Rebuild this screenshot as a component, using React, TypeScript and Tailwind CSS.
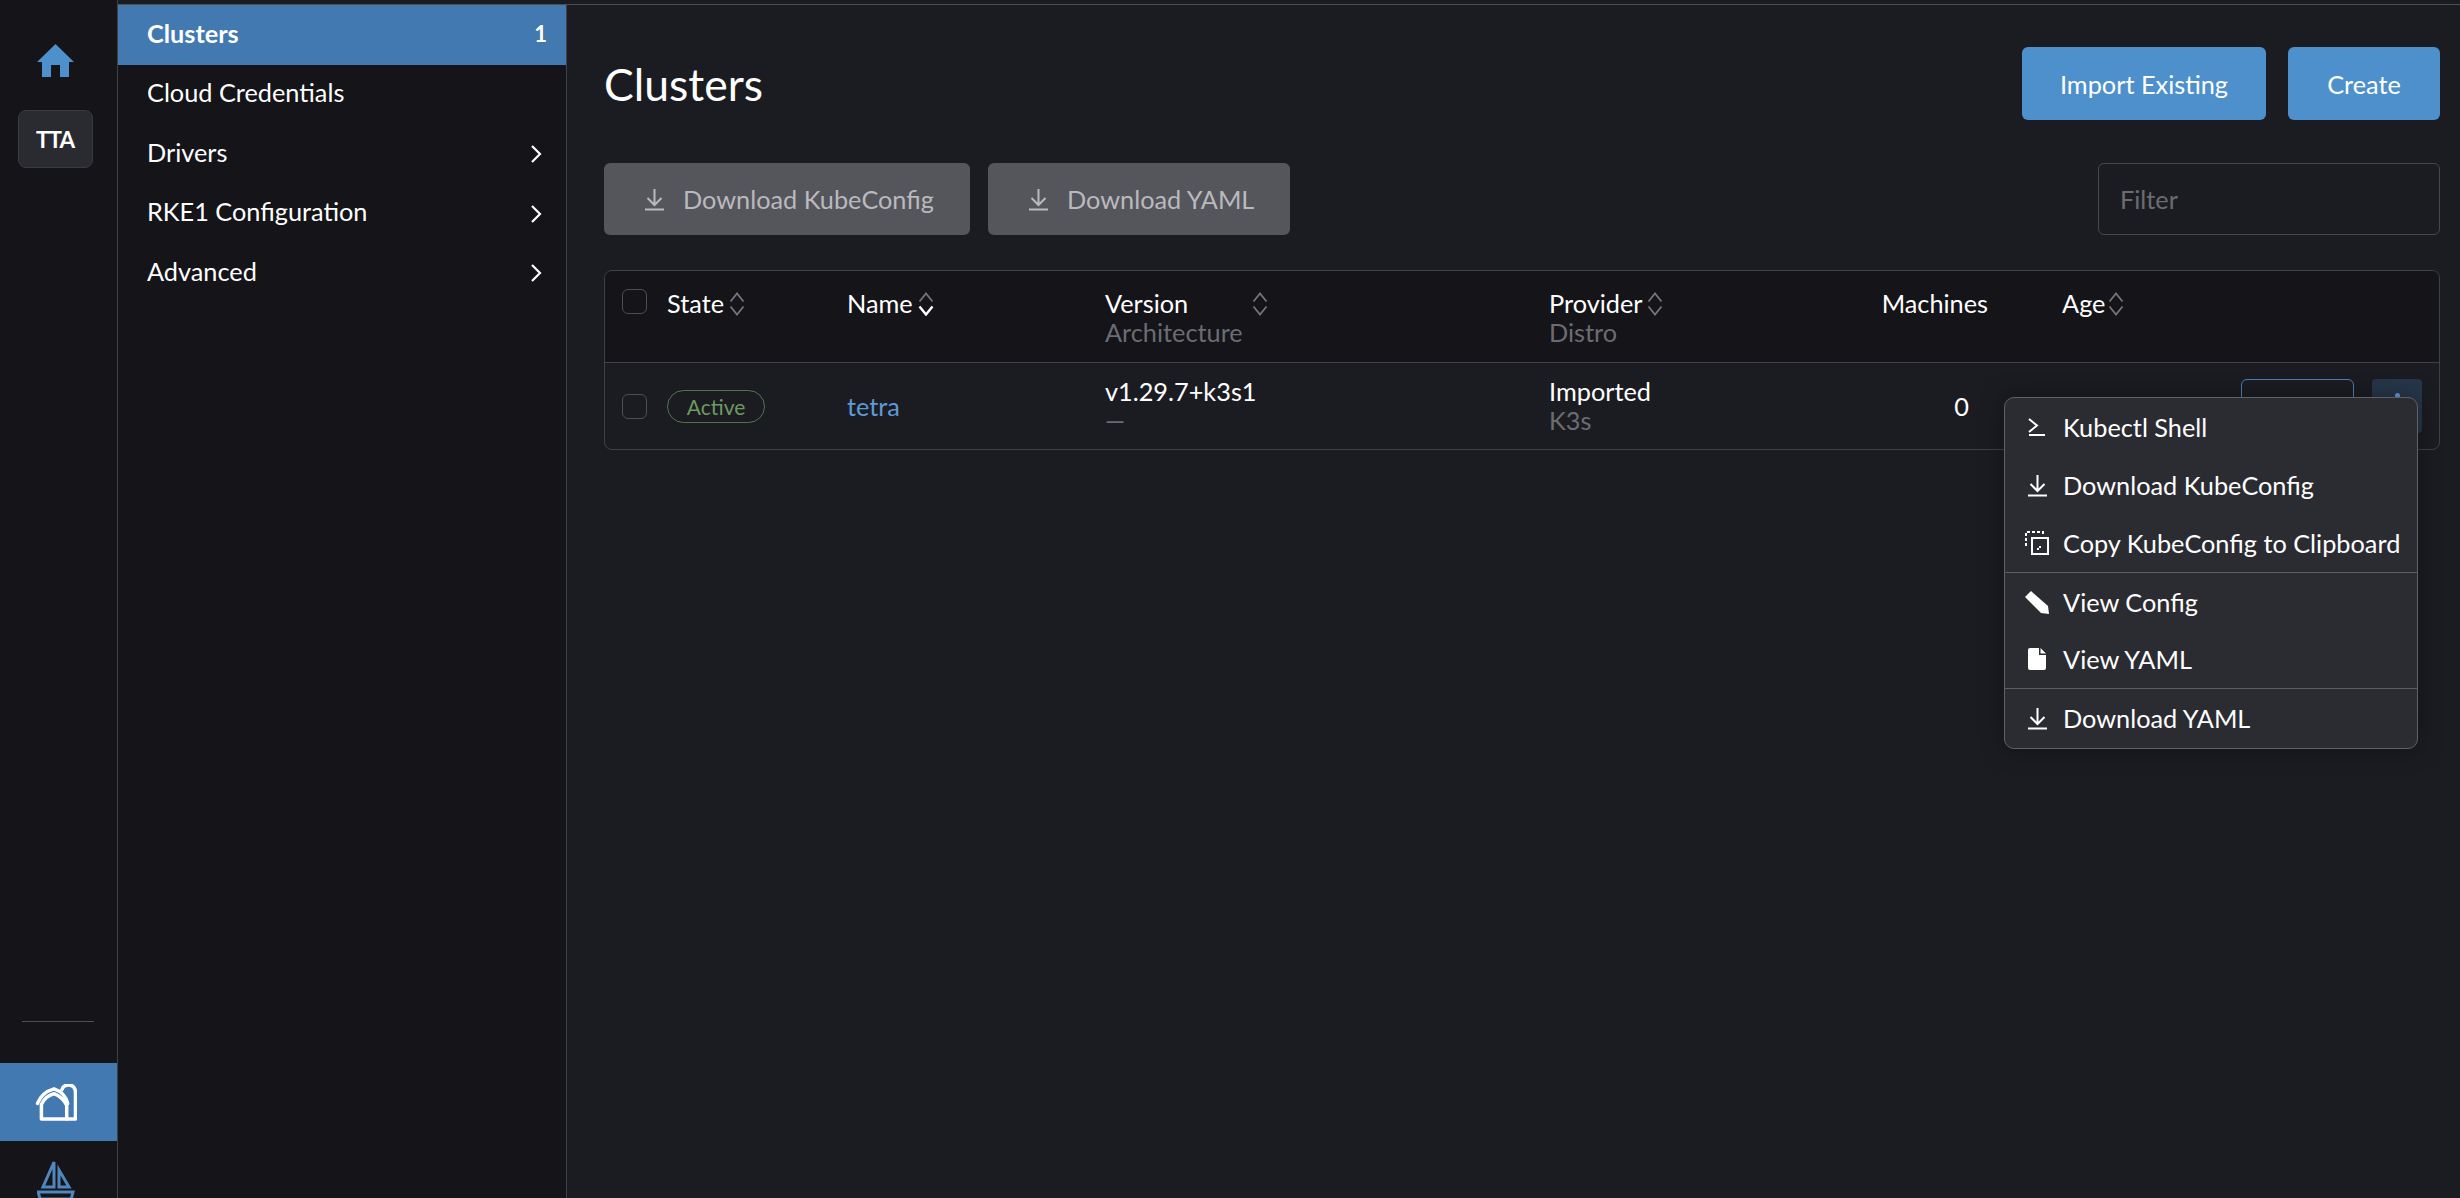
const cols = "grid grid-cols-[62px_180px_258px_444px_332px_107px_74px_1fr]";

function DownloadIcon() {
  return (
    <svg viewBox="0 0 21 23" className="w-[21px] h-[23px]" fill="none" stroke="currentColor" strokeWidth="2">
      <path d="M10.500 1v15M3.500 10l7 7 7-7M1 21.500h19" />
    </svg>
  );
}

function SortIcon({ active = false }: { active?: boolean }) {
  return (
    <svg viewBox="0 0 16 24" className="w-[16px] h-[24px] mt-[3px] shrink-0" fill="none" strokeWidth="1.8">
      <path d="M1.500 9.500 8 1.500l6.500 8" stroke="#74757a" />
      <path d="M1.500 14.500 8 22.500l6.500-8" stroke={active ? "#ffffff" : "#74757a"} strokeWidth={active ? 2.4 : 1.8} />
    </svg>
  );
}

function Chevron() {
  return (
    <svg viewBox="0 0 12 18" className="w-[12px] h-[18px] mr-[5px] mt-[4px]" fill="none" stroke="#fff" strokeWidth="2.200">
      <path d="M2 1l8 8-8 8" />
    </svg>
  );
}

function Check({ className }: { className: string }) {
  return <span className={`block w-[25px] h-[25px] rounded-[6px] border border-[#4d4e53] ${className}`} />;
}

function NavItem({ label, children, active }: { label: string; children?: React.ReactNode; active?: boolean }) {
  return (
    <div
      className={`flex items-center justify-between h-[59.500px] pb-[3px] pl-[29px] pr-[19px] ${
        active ? "bg-[#4179b0] font-bold" : ""
      }`}
    >
      <span>{label}</span>
      {children}
    </div>
  );
}

function MenuItem({ icon, label, border }: { icon: React.ReactNode; label: string; border?: boolean }) {
  return (
    <div className={`flex items-center h-[58px] pl-[20px] ${border ? "border-t border-[#5d5e63] pt-[2px]" : ""}`}>
      <span className="flex justify-center w-[24px] mr-[14px]">{icon}</span>
      <span>{label}</span>
    </div>
  );
}

export default function App() {
  return (
    <div className="flex h-screen overflow-hidden bg-[#1b1c21] text-white text-[25.300px] leading-[29px] font-['Lato','Noto_Sans',sans-serif]">
      {/* Icon rail */}
      <aside className="flex flex-col items-center w-[118px] shrink-0 bg-[#141419] border-r border-[#404146]">
        <svg viewBox="0 0 37 33" className="mt-[44px] mr-[6px] w-[37px] h-[33px] fill-[#4d90cb]">
          <path d="M18.500 0 37 18h-5v15h-9V21h-9v12H5V18H0z" />
        </svg>
        <div className="flex items-center justify-center mt-[33px] mr-[7px] w-[75px] h-[58px] rounded-[8px] border border-[#3a3b40] bg-[#2a2b30] text-[22.500px] font-bold tracking-[-1px]">
          TTA
        </div>
        <div className="flex-1" />
        <div className="w-[72px] h-px mr-[2px] bg-[#4c4d52] mb-[41px]" />
        <div className="flex items-center justify-center w-full h-[78px] bg-[#4179b0]">
          <svg viewBox="0 0 42 38" className="w-[42px] h-[37px] mr-[5px]" fill="none" stroke="#fff" strokeWidth="3.600" strokeLinejoin="round" strokeLinecap="round">
            <path d="M2 20C5 12 12 7 19 5C25 7 31 12 33 20" />
            <path d="M6 36V21C9 15 14 11 19 10C24 12 29 16 32 22V36z" />
            <path d="M27 6C28 2 31 1 34 1C38 1 41 4 41 9V36H32" />
          </svg>
        </div>
        <div className="h-[57px] w-full flex justify-center overflow-hidden pt-[17px] pr-[5px]">
          <svg viewBox="0 0 38 50" className="w-[38px] h-[50px] shrink-0" fill="none" stroke="#4f86bd" strokeWidth="3">
            <path d="M17 4V29H6z" />
            <path d="M22 12V29H32z" />
            <path d="M1 34H36L32 50H6z" />
            <path d="M4 41H34" />
          </svg>
        </div>
      </aside>

      <div className="flex flex-col flex-1 min-w-0">
        <div className="h-[5px] shrink-0 border-b border-[#4c4d52] bg-[#1b1c21]" />
        <div className="flex flex-1 min-h-0">
          {/* Side nav */}
          <nav className="w-[449px] shrink-0 bg-[#141419] border-r border-[#404146]">
            <NavItem label="Clusters" active>
              <span className="text-[22px]">1</span>
            </NavItem>
            <NavItem label="Cloud Credentials" />
            <NavItem label="Drivers">
              <Chevron />
            </NavItem>
            <NavItem label="RKE1 Configuration">
              <Chevron />
            </NavItem>
            <NavItem label="Advanced">
              <Chevron />
            </NavItem>
          </nav>

          <main className="relative flex-1 min-w-0 pl-[37px] pr-[20px] pt-[42px]">
            <header className="flex items-center justify-between h-[73px]">
              <h1 className="text-[44.500px] leading-[52px] font-normal">Clusters</h1>
              <div className="flex gap-[22px]">
                <button className="w-[244px] h-[73px] pt-[2px] rounded-[6px] bg-[#4d90cb]">Import Existing</button>
                <button className="w-[152px] h-[73px] pt-[2px] rounded-[6px] bg-[#4d90cb]">Create</button>
              </div>
            </header>

            <div className="flex items-center mt-[43px]">
              <button className="flex items-center w-[366px] h-[72px] pl-[40px] rounded-[6px] bg-[#55555c] text-[#b9b9be]">
                <DownloadIcon />
                <span className="ml-[18px]">Download KubeConfig</span>
              </button>
              <button className="flex items-center w-[302px] h-[72px] ml-[18px] pl-[40px] rounded-[6px] bg-[#55555c] text-[#b9b9be]">
                <DownloadIcon />
                <span className="ml-[18px]">Download YAML</span>
              </button>
              <div className="flex items-center w-[342px] h-[72px] ml-auto pl-[21px] rounded-[6px] border border-[#46474c] text-[#6b6c71]">
                Filter
              </div>
            </div>

            <div className="mt-[35px] rounded-[8px] border border-[#404146] overflow-hidden">
              <div className={`${cols} h-[92px] pt-[18px] bg-[#141419] border-b border-[#404146]`}>
                <Check className="ml-[17px]" />
                <div className="flex items-start gap-[5px] h-[29px]">
                  <span>State</span>
                  <SortIcon />
                </div>
                <div className="flex items-start gap-[5px] h-[29px]">
                  <span>Name</span>
                  <SortIcon active />
                </div>
                <div>
                  <div className="flex">
                    <span className="w-[147px]">Version</span>
                    <SortIcon />
                  </div>
                  <div className="text-[#6b6c71]">Architecture</div>
                </div>
                <div>
                  <div className="flex gap-[5px]">
                    <span>Provider</span>
                    <SortIcon />
                  </div>
                  <div className="text-[#6b6c71]">Distro</div>
                </div>
                <div className="text-right">Machines</div>
                <div />
                <div className="flex items-start gap-[3px] h-[29px]">
                  <span>Age</span>
                  <SortIcon />
                </div>
              </div>
              <div className={`${cols} items-center h-[86px]`}>
                <Check className="ml-[17px]" />
                <span className="flex items-center justify-center w-[98px] h-[33px] rounded-full border border-[#6e9a5f]/70 text-[21px] text-[#6e9a5f]">
                  Active
                </span>
                <span className="text-[#5e9ad6]">tetra</span>
                <div>
                  <div>v1.29.7+k3s1</div>
                  <div className="text-[#6b6c71]">—</div>
                </div>
                <div>
                  <div>Imported</div>
                  <div className="text-[#6b6c71]">K3s</div>
                </div>
                <div className="text-right pr-[19px]">0</div>
                <div />
                <div className="flex items-center justify-end gap-[18px] pr-[17px]">
                  <span className="block w-[113px] h-[54px] rounded-[6px] border border-[#4d7fb5]" />
                  <span className="flex flex-col items-center gap-[3px] pt-[14px] w-[50px] h-[54px] rounded-[4px] bg-[#26364a]">
                    <span className="block w-[5px] h-[5px] rounded-full bg-[#5e9ad6]" />
                    <span className="block w-[5px] h-[5px] rounded-full bg-[#5e9ad6]" />
                    <span className="block w-[5px] h-[5px] rounded-full bg-[#5e9ad6]" />
                  </span>
                </div>
              </div>
            </div>

            {/* Row action menu */}
            <div className="absolute left-[1437px] top-[392px] w-[414px] h-[352px] rounded-[10px] border border-[#606166] bg-[#2b2c32] overflow-hidden shadow-[0_0_24px_rgba(0,0,0,0.35)]">
              <MenuItem
                label="Kubectl Shell"
                icon={
                  <svg viewBox="0 0 18 18" className="w-[18px] h-[18px]" fill="none" stroke="currentColor" strokeWidth="2">
                    <path d="M1 1l8 6.500L1 14M1 17h16" />
                  </svg>
                }
              />
              <MenuItem label="Download KubeConfig" icon={<DownloadIcon />} />
              <MenuItem
                label="Copy KubeConfig to Clipboard"
                icon={
                  <svg viewBox="0 0 24 24" className="w-[24px] h-[24px]" fill="none" stroke="currentColor" strokeWidth="2">
                    <path d="M1 15V1h17v4" strokeDasharray="3 2" />
                    <path d="M7 7h16v16H7z" />
                    <path d="M12 18h3v-4" strokeDasharray="2 2" />
                  </svg>
                }
              />
              <MenuItem
                border
                label="View Config"
                icon={
                  <svg viewBox="0 0 24 24" className="w-[24px] h-[24px] fill-white">
                    <path d="M6 0 0 6l16 16 8 1-1-8z" />
                  </svg>
                }
              />
              <MenuItem
                label="View YAML"
                icon={
                  <svg viewBox="0 0 18 22" className="w-[18px] h-[22px] fill-white">
                    <path d="M2 0h9v7h7v13a2 2 0 0 1-2 2H2a2 2 0 0 1-2-2V2a2 2 0 0 1 2-2zM12.500 0l5.500 5.500h-5.500z" />
                  </svg>
                }
              />
              <MenuItem border label="Download YAML" icon={<DownloadIcon />} />
            </div>
          </main>
        </div>
      </div>
    </div>
  );
}
